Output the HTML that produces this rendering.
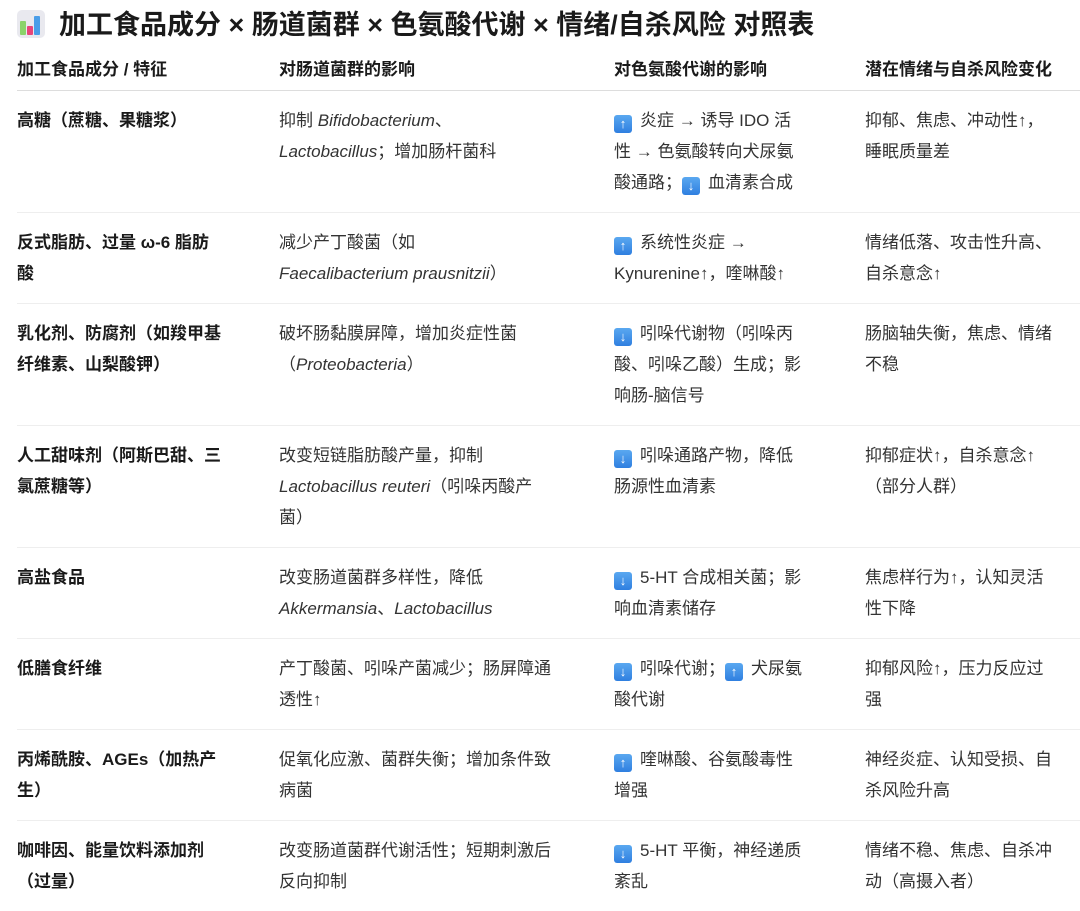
<!DOCTYPE html>
<html><head><meta charset="utf-8"><style>
body{margin:0;background:#fff;width:1080px;height:898px;overflow:hidden;font-family:"Liberation Sans","Noto Sans CJK SC",sans-serif;color:#1a1a1a}
h1{position:absolute;left:17px;top:3px;margin:0;font-size:27px;font-weight:bold;line-height:44px;white-space:nowrap}
.ic{display:inline-block;width:28px;height:28px;vertical-align:-4px;margin-right:14px;background:#e9e9ef;border-radius:5px;position:relative}
.ic i{position:absolute;bottom:3px;width:6px;border-radius:1px}
table{position:absolute;left:17px;top:48px;border-collapse:collapse;width:1063px;table-layout:fixed;font-size:17px;line-height:31px}
th{text-align:left;font-weight:bold;height:42px;padding:0;border-bottom:1.5px solid #ddd;vertical-align:middle;white-space:nowrap}
td{padding:14px 0;vertical-align:top;border-bottom:1px solid #eee;white-space:nowrap;color:#333;height:31px}
td:first-child{font-weight:bold;color:#1a1a1a}
tr:last-child td{border-bottom:none}
em{font-style:italic}
.a{font-family:"Noto Sans CJK SC",sans-serif;line-height:0;display:inline-block;vertical-align:top;height:31px;line-height:31px}
.b{display:inline-block;width:18px;height:18px;border-radius:3px;background:linear-gradient(#5aa8f0,#2f7fe0);color:#fff;font-size:13px;line-height:18px;text-align:center;vertical-align:-2px;margin-right:8px;font-weight:bold}
</style></head><body>
<h1><span class="ic"><i style="left:3px;height:14px;background:#8bd36a"></i><i style="left:10px;height:9px;background:#e8457a"></i><i style="left:17px;height:19px;background:#4a9de8"></i></span>加工食品成分 × 肠道菌群 × 色氨酸代谢 × 情绪/自杀风险 对照表</h1>
<table>
<colgroup><col style="width:262px"><col style="width:335px"><col style="width:251px"><col style="width:215px"></colgroup>
<tr><th>加工食品成分 / 特征</th><th>对肠道菌群的影响</th><th>对色氨酸代谢的影响</th><th>潜在情绪与自杀风险变化</th></tr>
<tr style="height:122px"><td>高糖（蔗糖、果糖浆）</td><td>抑制 <em>Bifidobacterium</em>、<br><em>Lactobacillus</em>；增加肠杆菌科</td><td><span class="b">↑</span>炎症 → 诱导 IDO 活<br>性 → 色氨酸转向犬尿氨<br>酸通路；<span class="b">↓</span>血清素合成</td><td>抑郁、焦虑、冲动性↑，<br>睡眠质量差</td></tr>
<tr style="height:90px"><td>反式脂肪、过量 ω-6 脂肪<br>酸</td><td>减少产丁酸菌（如<br><em>Faecalibacterium prausnitzii</em>）</td><td><span class="b">↑</span>系统性炎症 →<br>Kynurenine↑，喹啉酸↑</td><td>情绪低落、攻击性升高、<br>自杀意念↑</td></tr>
<tr><td>乳化剂、防腐剂（如羧甲基<br>纤维素、山梨酸钾）</td><td>破坏肠黏膜屏障，增加炎症性菌<br>（<em>Proteobacteria</em>）</td><td><span class="b">↓</span>吲哚代谢物（吲哚丙<br>酸、吲哚乙酸）生成；影<br>响肠-脑信号</td><td>肠脑轴失衡，焦虑、情绪<br>不稳</td></tr>
<tr><td>人工甜味剂（阿斯巴甜、三<br>氯蔗糖等）</td><td>改变短链脂肪酸产量，抑制<br><em>Lactobacillus reuteri</em>（吲哚丙酸产<br>菌）</td><td><span class="b">↓</span>吲哚通路产物，降低<br>肠源性血清素</td><td>抑郁症状↑，自杀意念↑<br>（部分人群）</td></tr>
<tr><td>高盐食品</td><td>改变肠道菌群多样性，降低<br><em>Akkermansia</em>、<em>Lactobacillus</em></td><td><span class="b">↓</span>5-HT 合成相关菌；影<br>响血清素储存</td><td>焦虑样行为↑，认知灵活<br>性下降</td></tr>
<tr><td>低膳食纤维</td><td>产丁酸菌、吲哚产菌减少；肠屏障通<br>透性↑</td><td><span class="b">↓</span>吲哚代谢；<span class="b">↑</span>犬尿氨<br>酸代谢</td><td>抑郁风险↑，压力反应过<br>强</td></tr>
<tr><td>丙烯酰胺、AGEs（加热产<br>生）</td><td>促氧化应激、菌群失衡；增加条件致<br>病菌</td><td><span class="b">↑</span>喹啉酸、谷氨酸毒性<br>增强</td><td>神经炎症、认知受损、自<br>杀风险升高</td></tr>
<tr><td>咖啡因、能量饮料添加剂<br>（过量）</td><td>改变肠道菌群代谢活性；短期刺激后<br>反向抑制</td><td><span class="b">↓</span>5-HT 平衡，神经递质<br>紊乱</td><td>情绪不稳、焦虑、自杀冲<br>动（高摄入者）</td></tr>
</table>
</body></html>
